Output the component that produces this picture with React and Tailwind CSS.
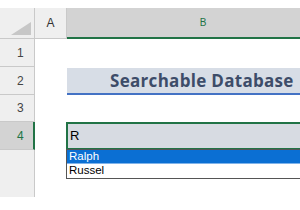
import React from "react";

const rowHead =
  "w-[35px] shrink-0 bg-[#efefef] border-r border-b border-[#c9c9c9] text-[12px] text-[#444] pl-[17px] flex items-center";

export default function App() {
  return (
    <div
      className="w-[300px] h-[210px] bg-white overflow-hidden relative"
      style={{ fontFamily: '"Liberation Sans", Arial, sans-serif' }}
    >
      {/* top strip */}
      <div className="h-[8px] bg-white" />

      {/* column headers */}
      <div className="flex h-[31px]">
        <div className="w-[35px] shrink-0 bg-[#efefef] border-r border-b border-[#c9c9c9] relative">
          <svg className="absolute right-[3px] bottom-[3px]" width="20" height="13" viewBox="0 0 20 13">
            <polygon points="20,0 20,13 0,13" fill="#c7c7c7" />
          </svg>
        </div>
        <div className="w-[32px] shrink-0 bg-[#efefef] border-r border-b border-[#c9c9c9] flex items-center justify-center text-[12px] text-[#333]">
          A
        </div>
        <div className="w-[272px] shrink-0 bg-[#d3d3d3] border-b-2 border-[#217346] flex items-center justify-center text-[10px] text-[#217346]">
          B
        </div>
      </div>

      {/* row 1 */}
      <div className="flex h-[28px]">
        <div className={rowHead}>1</div>
        <div className="flex-1" />
      </div>

      {/* row 2 */}
      <div className="flex h-[28px]">
        <div className={rowHead}>2</div>
        <div className="w-[32px] shrink-0 pt-[1px]" />
        <div className="flex-1 pt-[1px] overflow-hidden">
          <div
            className="h-[27px] w-[272px] bg-[#d7dde6] border-b-2 border-[#4472c4] flex items-center pl-[43px] text-[17px] font-bold tracking-[0.3px] text-[#3d4c69] whitespace-nowrap"
            style={{ fontFamily: '"Open Sans", "Liberation Sans", sans-serif' }}
          >
            Searchable Database
          </div>
        </div>
      </div>

      {/* row 3 */}
      <div className="flex h-[27px]">
        <div className={rowHead}>3</div>
        <div className="flex-1" />
      </div>

      {/* row 4 (active) */}
      <div className="flex h-[28px]">
        <div className="w-[35px] shrink-0 bg-[#d3d3d3] border-r-2 border-b border-r-[#217346] border-b-[#c9c9c9] text-[12px] text-[#217346] pl-[17px] flex items-center">
          4
        </div>
        <div className="w-[31px] shrink-0" />
        <div className="flex-1 border-2 border-r-0 border-[#217346] bg-[#d7dbe2] flex items-center pl-[2px] text-[13px] text-black">
          R
        </div>
      </div>

      {/* rows below */}
      <div className="flex h-[47px]">
        <div className="w-[35px] shrink-0 bg-[#efefef] border-r border-[#c9c9c9]" />
        <div className="flex-1" />
      </div>

      {/* autocomplete list */}
      <div className="absolute left-[66px] top-[149px] w-[240px] bg-white border border-[#555] text-[11.5px] leading-[13px]">
        <div className="h-[14px] bg-[#0b6fd3] text-white pl-[2px] border-b border-[#7fb3ea]">Ralph</div>
        <div className="h-[14px] text-black pl-[2px]">Russel</div>
      </div>
    </div>
  );
}
